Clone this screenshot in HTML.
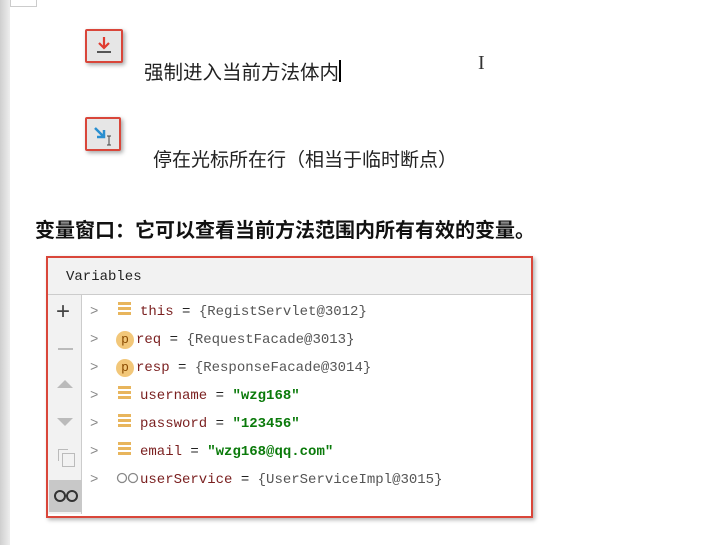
<!DOCTYPE html>
<html><head><meta charset="utf-8"><style>
body{margin:0;width:705px;height:545px;background:#fff;position:relative;overflow:hidden;font-family:"Liberation Sans","Noto Sans CJK SC",sans-serif}
.a{position:absolute}
.ib{position:absolute;width:34px;height:30px;background:#e6e6e6;border:2px solid #d9463a;border-radius:2px;box-shadow:2px 2px 4px rgba(0,0,0,.35)}
.row{position:absolute;left:90px;font:14px "Liberation Mono","Noto Sans CJK SC",monospace;color:#222;white-space:nowrap;height:20px;line-height:20px}
.row .ar{display:inline-block;width:26px;color:#888}
.n{color:#7a1f1f}.v{color:#555}.s{color:#0a7a0a;font-weight:bold}
.ham{display:inline-block;width:13px;height:14px;background:repeating-linear-gradient(#e8b55c 0 3px,transparent 3px 5px);margin-right:9px;vertical-align:-1px}
.p{display:inline-block;width:18px;height:18px;border-radius:50%;background:#f2c779;color:#8a4b00;font-size:13px;line-height:18px;text-align:center;margin-right:2px;vertical-align:0}
</style></head><body>
<div class="a" style="left:0;top:0;width:10px;height:545px;background:linear-gradient(90deg,#cfcfcf,#eee)"></div>
<div class="a" style="left:10px;top:0;width:25px;height:6px;border:1px solid #ccc;border-top:none"></div>
<div class="ib" style="left:85px;top:29px"><svg width="34" height="30"><path d="M17 6v10M12 12l5 5 5-5" stroke="#e03b30" stroke-width="2.2" fill="none"/><path d="M10 21h14" stroke="#555" stroke-width="2"/></svg></div>
<div class="a" style="left:144px;top:56px;font-size:19.5px;color:#222">强制进入当前方法体内<span style="display:inline-block;width:1.5px;height:22px;background:#000;vertical-align:-3px"></span></div>
<div class="a" style="left:478px;top:52px;font:20px 'Liberation Serif',serif;color:#333">I</div>
<div class="ib" style="left:85px;top:117px;width:32px"><svg width="32" height="30"><path d="M8 9l9 9M17 11v7h-7" stroke="#2a8fd0" stroke-width="2.5" fill="none"/><path d="M20 17h4M22 17v9M20 26h4" stroke="#444" stroke-width="1"/></svg></div>
<div class="a" style="left:153px;top:145px;font-size:19px;color:#222">停在光标所在行（相当于临时断点）</div>
<div class="a" style="left:35px;top:214px;font-size:20px;font-weight:bold;color:#111">变量窗口：它可以查看当前方法范围内所有有效的变量。</div>
<div class="a" style="left:46px;top:256px;width:483px;height:258px;border:2px solid #d9463a;box-shadow:2px 2px 4px rgba(0,0,0,.3);background:#fff"></div>
<div class="a" style="left:48px;top:258px;width:483px;height:36px;background:#f2f2f2;border-bottom:1px solid #ccc"></div>
<div class="a" style="left:66px;top:269px;font:14px 'Liberation Mono',monospace;color:#222">Variables</div>
<div class="a" style="left:48px;top:295px;width:33px;height:219px;background:#f2f2f2;border-right:1px solid #ccc"></div>
<div class="a" style="left:56px;top:298px;font-size:24px;color:#444">+</div>
<div class="a" style="left:58px;top:348px;width:15px;height:2px;background:#bbb"></div>
<div class="a" style="left:57px;top:380px;width:0;height:0;border:8px solid transparent;border-bottom:8px solid #bbb;border-top:none"></div>
<div class="a" style="left:57px;top:418px;width:0;height:0;border:8px solid transparent;border-top:8px solid #bbb;border-bottom:none"></div>
<div class="a" style="left:58px;top:449px;width:9px;height:11px;border:1.5px solid #bbb;border-right:none;border-bottom:none"></div>
<div class="a" style="left:62px;top:453px;width:11px;height:12px;border:1.5px solid #bbb"></div>
<div class="a" style="left:49px;top:480px;width:33px;height:32px;background:#c8c8c8"></div>
<svg class="a" style="left:53px;top:488px" width="26" height="14"><circle cx="7" cy="8" r="5" stroke="#333" stroke-width="2" fill="none"/><circle cx="19" cy="8" r="5" stroke="#333" stroke-width="2" fill="none"/></svg>
<div class="row" style="top:302px"><span class="ar">&gt;</span><span class="ham" style="margin-left:2px"></span><span class="n">this</span> = <span class="v">{RegistServlet@3012}</span></div>
<div class="row" style="top:330px"><span class="ar">&gt;</span><span class="p">p</span><span class="n">req</span> = <span class="v">{RequestFacade@3013}</span></div>
<div class="row" style="top:358px"><span class="ar">&gt;</span><span class="p">p</span><span class="n">resp</span> = <span class="v">{ResponseFacade@3014}</span></div>
<div class="row" style="top:386px"><span class="ar">&gt;</span><span class="ham" style="margin-left:2px"></span><span class="n">username</span> = <span class="s">"wzg168"</span></div>
<div class="row" style="top:414px"><span class="ar">&gt;</span><span class="ham" style="margin-left:2px"></span><span class="n">password</span> = <span class="s">"123456"</span></div>
<div class="row" style="top:442px"><span class="ar">&gt;</span><span class="ham" style="margin-left:2px"></span><span class="n">email</span> = <span class="s">"wzg168@qq.com"</span></div>
<div class="row" style="top:470px"><span class="ar">&gt;</span><svg width="24" height="12" style="vertical-align:-1px"><circle cx="6" cy="6" r="4.5" stroke="#888" stroke-width="1.3" fill="none"/><circle cx="17" cy="6" r="4.5" stroke="#888" stroke-width="1.3" fill="none"/></svg><span class="n">userService</span> = <span class="v">{UserServiceImpl@3015}</span></div>
</body></html>
